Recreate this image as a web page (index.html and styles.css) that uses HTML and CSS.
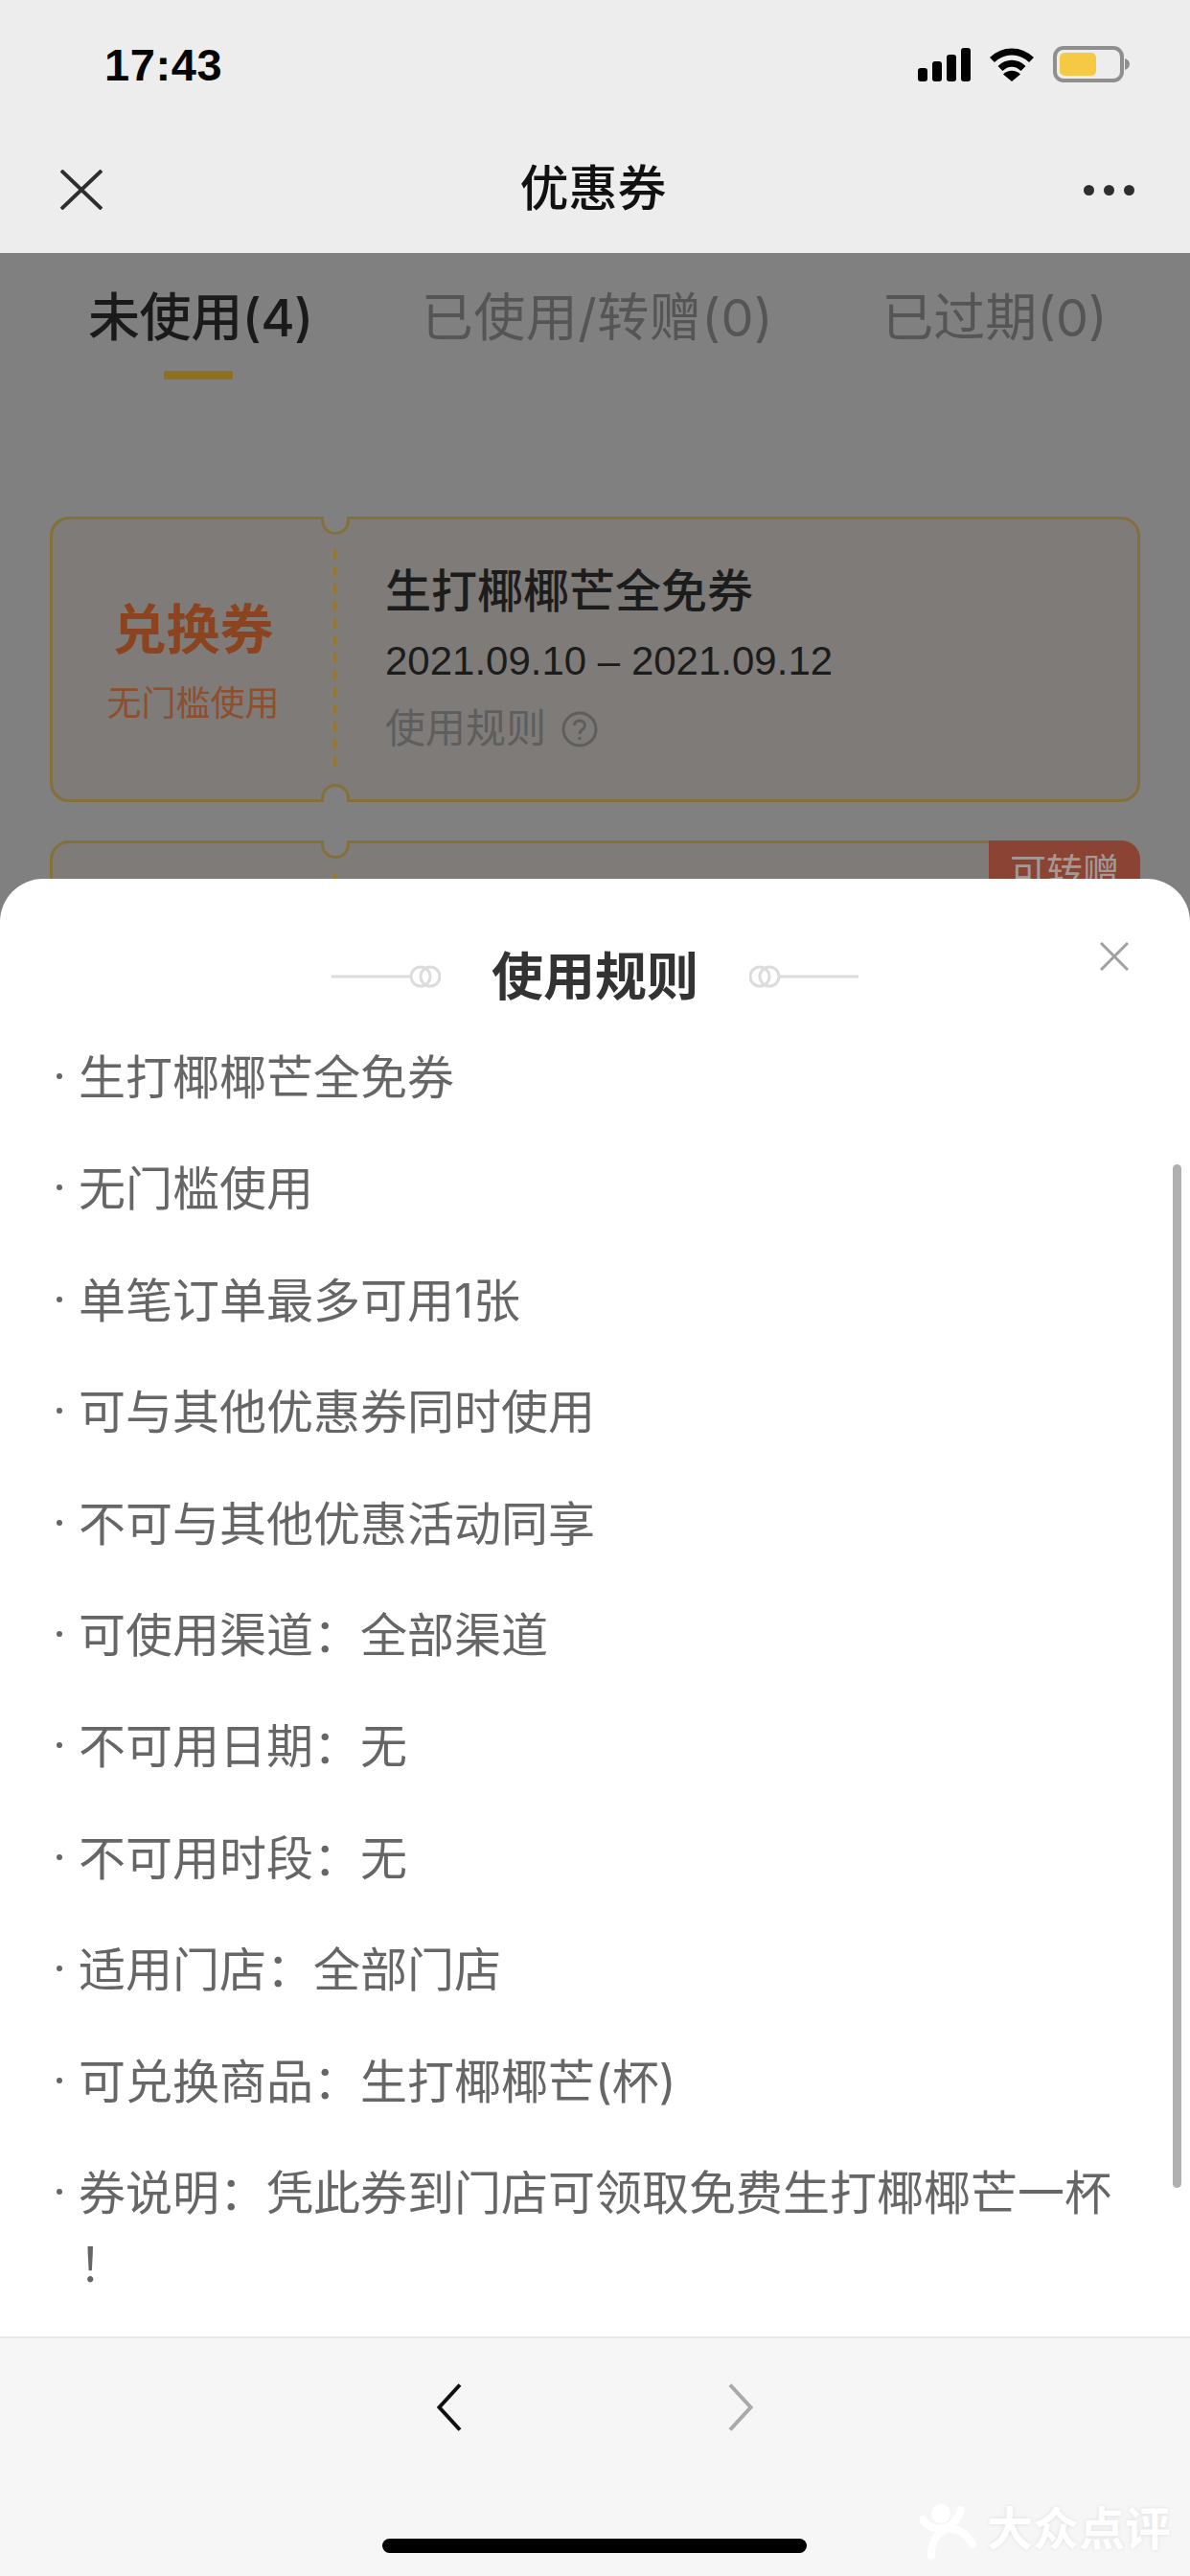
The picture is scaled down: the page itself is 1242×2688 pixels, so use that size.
FILE: index.html
```html
<!DOCTYPE html>
<html lang="zh-CN">
<head>
<meta charset="utf-8">
<title>优惠券</title>
<link rel="stylesheet" href="styles.css">
</head>
<body>
<div class="app">
  <header class="top">
    <div class="status">
      <span class="time">17:43</span>
      <div class="status-icons">
        <svg class="signal" viewBox="0 0 55 35"><rect x="0" y="21" width="10" height="14" rx="3"/><rect x="15" y="14" width="10" height="21" rx="3"/><rect x="30" y="7" width="10" height="28" rx="3"/><rect x="45" y="0" width="10" height="35" rx="3"/></svg>
        <svg class="wifi" viewBox="0 0 48 35"><path class="wifi-arc" d="M3.5 12.5C15 1 33 1 44.5 12.5"/><path class="wifi-arc" d="M12 21.5C19 14.5 29 14.5 36 21.5"/><path d="M24 35L15 27.5C20 22.5 28 22.5 33 27.5Z"/></svg>
        <svg class="battery" viewBox="0 0 80 38"><rect class="battery-shell" x="2" y="2" width="70" height="34" rx="9"/><rect class="battery-level" x="7" y="7" width="38" height="24" rx="5"/><path class="battery-cap" d="M75 13C78 14 80 16 80 19S78 24 75 25Z"/></svg>
      </div>
    </div>
    <nav class="nav">
      <svg class="nav-close" viewBox="0 0 44 42"><path d="M1 1L43 41M43 1L1 41"/></svg>
      <h1 class="nav-title">优惠券</h1>
      <div class="nav-more"><i></i><i></i><i></i></div>
    </nav>
  </header>

  <main class="page">
    <div class="tabs">
      <div class="tab tab-active">未使用(4)<span class="tab-bar"></span></div>
      <div class="tab tab-wide">已使用/转赠(0)</div>
      <div class="tab">已过期(0)</div>
    </div>
    <div class="coupons">
      <article class="coupon">
        <span class="notch notch-top"></span>
        <span class="notch notch-bottom"></span>
        <div class="coupon-left">
          <div class="coupon-type">兑换券</div>
          <div class="coupon-cond">无门槛使用</div>
        </div>
        <div class="coupon-right">
          <div class="coupon-name">生打椰椰芒全免券</div>
          <div class="coupon-date">2021.09.10 – 2021.09.12</div>
          <div class="coupon-rule">使用规则
            <svg class="help" viewBox="0 0 38 38"><circle cx="19" cy="19" r="17"/><path d="M13.5 15C13.5 11.5 16 10 19 10S24.500 12 24.500 15C24.500 19 19 19.500 19 24"/><circle class="help-dot" cx="19" cy="28.500" r="1.800"/></svg>
          </div>
        </div>
      </article>
      <article class="coupon">
        <span class="notch notch-top"></span>
        <span class="badge">可转赠</span>
        <div class="coupon-left"></div>
        <div class="coupon-right"></div>
      </article>
    </div>
  </main>

  <section class="sheet">
    <div class="sheet-head">
      <svg class="ornament" viewBox="0 0 114 24"><path d="M0 12H83"/><circle cx="93" cy="12" r="10"/><circle cx="103" cy="12" r="10"/></svg>
      <h2 class="sheet-title">使用规则</h2>
      <svg class="ornament ornament-right" viewBox="0 0 114 24"><path d="M0 12H83"/><circle cx="93" cy="12" r="10"/><circle cx="103" cy="12" r="10"/></svg>
      <svg class="sheet-close" viewBox="0 0 30 30"><path d="M1 1L29 29M29 1L1 29"/></svg>
    </div>
    <div class="rules-wrap">
      <ul class="rules">
        <li>生打椰椰芒全免券</li>
        <li>无门槛使用</li>
        <li>单笔订单最多可用1张</li>
        <li>可与其他优惠券同时使用</li>
        <li>不可与其他优惠活动同享</li>
        <li>可使用渠道：全部渠道</li>
        <li>不可用日期：无</li>
        <li>不可用时段：无</li>
        <li>适用门店：全部门店</li>
        <li>可兑换商品：生打椰椰芒(杯)</li>
        <li>券说明：凭此券到门店可领取免费生打椰椰芒一杯<br>！</li>
      </ul>
      <span class="scrollbar"></span>
    </div>
    <footer class="toolbar">
      <svg class="chev" viewBox="0 0 26 50"><path d="M24 1.500L2.500 25L24 48.500"/></svg>
      <svg class="chev chev-off" viewBox="0 0 26 50"><path d="M2 1.500L23.500 25L2 48.500"/></svg>
      <span class="home"></span>
      <div class="mark">
        <svg class="mark-logo" viewBox="0 0 60 60"><circle cx="22" cy="11" r="10"/><path class="mark-arm" d="M43 7C39 22 27 26 19 33C14 38 12 46 12 55M3 17C7 24 13 27 23 26C35 25 47 29 55 43"/></svg>
        <span class="mark-text">大众点评</span>
      </div>
    </footer>
  </section>
</div>
</body>
</html>
```
FILE: styles.css
```css
* { box-sizing: border-box; }
html, body { margin: 0; padding: 0; }
body {
  width: 1242px;
  height: 2688px;
  overflow: hidden;
  background: #808080;
  font-family: "Liberation Sans", "Noto Sans CJK SC", sans-serif;
}
h1, h2, ul { margin: 0; padding: 0; font-weight: inherit; font-size: inherit; }
svg { display: block; flex: none; }

.app { position: relative; width: 1242px; height: 2688px; overflow: hidden; }

.top { height: 264px; background: #ededed; }
.status {
  height: 134px;
  padding: 0 63px 0 109px;
  display: flex;
  align-items: center;
  justify-content: space-between;
}
.time { font-size: 47px; font-weight: 700; color: #050505; letter-spacing: 0.6px; }
.status-icons { display: flex; align-items: center; gap: 19px; }
.signal { width: 55px; height: 35px; fill: #000; }
.wifi { width: 48px; height: 35px; fill: #000; }
.wifi-arc { fill: none; stroke: #000; stroke-width: 7; }
.battery { width: 80px; height: 38px; }
.battery-shell { fill: none; stroke: #8f8f8f; stroke-width: 4; }
.battery-level { fill: #f6c944; }
.battery-cap { fill: #8f8f8f; }

.nav {
  height: 128px;
  padding: 0 58px 0 63px;
  display: flex;
  align-items: center;
  justify-content: space-between;
}
.nav-close { width: 44px; height: 42px; }
.nav-close path { fill: none; stroke: #2e2e2e; stroke-width: 4; }
.nav-title { font-size: 51px; font-weight: 500; color: #111; line-height: 60px; }
.nav-more { display: flex; gap: 10px; }
.nav-more i { display: block; width: 11px; height: 11px; border-radius: 50%; background: #2e2e2e; }

.page { height: 655px; overflow: hidden; padding-top: 2px; }
.tabs {
  display: flex;
  gap: 113px;
  padding: 36px 0 0 92px;
  font-family: Inter, "Noto Sans CJK SC", sans-serif;
}
.tab {
  position: relative;
  font-size: 54px;
  line-height: 60px;
  color: #555;
  white-space: nowrap;
}
.tab-active { color: #1a1a1a; font-weight: 500; letter-spacing: -0.4px; }
.tab-wide { letter-spacing: 0.5px; }
.tab-bar {
  position: absolute;
  left: 79px;
  top: 85px;
  width: 72px;
  height: 9px;
  border-radius: 2px;
  background: #8f7020;
}
.coupons {
  margin: 177px 52px 0;
  display: flex;
  flex-direction: column;
  gap: 40px;
}
.coupon {
  position: relative;
  height: 298px;
  flex: none;
  display: flex;
  border: 3px solid #83703a;
  border-radius: 20px;
  background: #7e7b78;
}
.notch {
  position: absolute;
  left: 280px;
  width: 30px;
  height: 19px;
  background: #808080;
  border: 3px solid #83703a;
}
.notch-top { top: -3px; border-top: 0; border-radius: 0 0 15px 15px; }
.notch-bottom { bottom: -3px; border-bottom: 0; border-radius: 15px 15px 0 0; }
.coupon-left {
  position: relative;
  width: 295px;
  flex: none;
  padding: 81px 2px 0 0;
  text-align: center;
}
.coupon-left::after {
  content: "";
  position: absolute;
  left: 293px;
  top: 31px;
  width: 3px;
  height: 232px;
  background: repeating-linear-gradient(#94782f 0 10px, transparent 10px 18px);
}
.coupon-type { font-size: 56px; line-height: 70px; font-weight: 700; color: #8c4420; }
.coupon-cond { font-size: 36px; line-height: 50px; margin-top: 17px; color: #8f4e2c; }
.coupon-right { padding: 41px 0 0 52px; }
.coupon-name { font-size: 48px; line-height: 70px; font-weight: 500; color: #1c1c1c; }
.coupon-date { font-size: 42px; line-height: 50px; margin-top: 12px; color: #1c1c1c; }
.coupon-rule {
  display: flex;
  align-items: center;
  gap: 16px;
  font-size: 42px;
  line-height: 60px;
  margin-top: 16px;
  color: #5e5e5e;
}
.help { width: 38px; height: 38px; }
.help circle { fill: none; stroke: #5e5e5e; stroke-width: 3; }
.help path { fill: none; stroke: #5e5e5e; stroke-width: 3; }
.help .help-dot { fill: #5e5e5e; stroke: none; }
.badge {
  position: absolute;
  top: -3px;
  right: -3px;
  width: 158px;
  height: 60px;
  padding-top: 8px;
  text-align: center;
  font-size: 38px;
  line-height: 50px;
  color: #a39a95;
  background: #8b4433;
  border-radius: 0 20px 0 0;
}

.sheet {
  position: absolute;
  left: 0;
  right: 0;
  top: 917px;
  bottom: 0;
  display: flex;
  flex-direction: column;
  background: #fff;
  border-radius: 45px 45px 0 0;
  overflow: hidden;
}
.sheet-head {
  position: relative;
  height: 170px;
  flex: none;
  display: flex;
  align-items: flex-start;
  justify-content: center;
  padding: 68px 0 0 0;
  gap: 53px;
}
.sheet-title { font-size: 54px; font-weight: 700; line-height: 70px; color: #333; }
.ornament {
  width: 114px;
  height: 24px;
  margin-top: 22px;
  fill: none;
  stroke: #dcdcdc;
  stroke-width: 3;
}
.ornament-right { transform: scaleX(-1); }
.sheet-close {
  position: absolute;
  top: 66px;
  right: 64px;
  width: 30px;
  height: 30px;
}
.sheet-close path { fill: none; stroke: #a0a0a0; stroke-width: 3; }

.rules-wrap { position: relative; flex: 1; min-height: 0; }
.rules { list-style: none; font-family: Inter, "Noto Sans CJK SC", sans-serif; }
.rules li {
  position: relative;
  padding: 0 0 0 82px;
  margin-bottom: 41.4px;
  font-size: 49px;
  line-height: 75px;
  color: #666;
}
.rules li::before {
  content: "";
  position: absolute;
  left: 59px;
  top: 33px;
  width: 6px;
  height: 6px;
  border-radius: 50%;
  background: #666;
}
.scrollbar {
  position: absolute;
  top: 128px;
  right: 9px;
  width: 9px;
  height: 1068px;
  border-radius: 5px;
  background: #b0b0b0;
}

.toolbar {
  position: relative;
  height: 250px;
  flex: none;
  display: flex;
  align-items: flex-start;
  justify-content: center;
  gap: 278px;
  padding-top: 47px;
  background: #f6f6f6;
  border-top: 2px solid #e8e8e8;
}
.chev { width: 26px; height: 50px; }
.chev path { fill: none; stroke: #111; stroke-width: 4; }
.chev-off path { stroke: #aaa; }
.home {
  position: absolute;
  left: 399px;
  bottom: 24px;
  width: 443px;
  height: 15px;
  border-radius: 8px;
  background: #000;
}
.mark {
  position: absolute;
  left: 960px;
  top: 172px;
  display: flex;
  align-items: flex-start;
  gap: 10px;
}
.mark-logo { width: 60px; height: 60px; fill: #fff; }
.mark-arm { fill: none; stroke: #fff; stroke-width: 8; stroke-linecap: round; }
.mark-text {
  font-size: 48px;
  line-height: 56px;
  font-weight: 700;
  color: #fff;
  text-shadow: 0 0 4px rgba(0, 0, 0, 0.1);
}
```
